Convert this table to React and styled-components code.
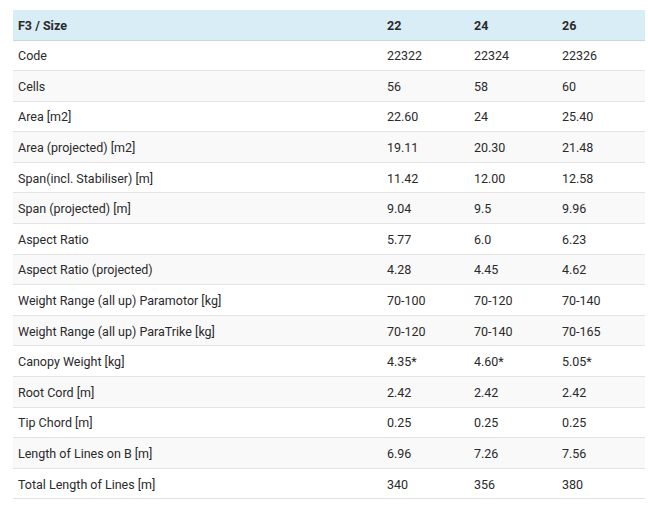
import React from "react";
import styled, { createGlobalStyle } from "styled-components";

const Global = createGlobalStyle`
  html, body { margin: 0; padding: 0; background: #fff; }
  body { font-family: Roboto, "Liberation Sans", Arial, sans-serif; }
`;

const Wrap = styled.div`
  padding: 10px 3px 0 13px;
`;

const Table = styled.table`
  width: 632px;
  border-collapse: collapse;
  font-size: 12.5px;
  color: #2a2a2a;
  table-layout: fixed;
`;

const HeadRow = styled.tr`
  background: #d9edf7;
`;

const Th = styled.th`
  box-sizing: border-box;
  text-align: left;
  font-weight: 700;
  padding: 1px 5px 0;
  height: 30px;
  border-bottom: 1px solid #c9d6de;
  width: ${(p) => p.$w}px;
`;

const Row = styled.tr`
  background: ${(p) => (p.$alt ? "#f9f9f9" : "#fff")};
`;

const Td = styled.td`
  padding: 1px 5px 0;
  height: 28.6px;
  border-bottom: 1px solid #e2e2e2;
  white-space: nowrap;
`;

const data = [
  ["Code", "22322", "22324", "22326"],
  ["Cells", "56", "58", "60"],
  ["Area [m2]", "22.60", "24", "25.40"],
  ["Area (projected) [m2]", "19.11", "20.30", "21.48"],
  ["Span(incl. Stabiliser) [m]", "11.42", "12.00", "12.58"],
  ["Span (projected) [m]", "9.04", "9.5", "9.96"],
  ["Aspect Ratio", "5.77", "6.0", "6.23"],
  ["Aspect Ratio (projected)", "4.28", "4.45", "4.62"],
  ["Weight Range (all up) Paramotor [kg]", "70-100", "70-120", "70-140"],
  ["Weight Range (all up) ParaTrike [kg]", "70-120", "70-140", "70-165"],
  ["Canopy Weight [kg]", "4.35*", "4.60*", "5.05*"],
  ["Root Cord [m]", "2.42", "2.42", "2.42"],
  ["Tip Chord [m]", "0.25", "0.25", "0.25"],
  ["Length of Lines on B [m]", "6.96", "7.26", "7.56"],
  ["Total Length of Lines [m]", "340", "356", "380"],
];

export default function App() {
  return (
    <Wrap>
      <Global />
      <Table>
        <thead>
          <HeadRow>
            <Th $w={369}>F3 / Size</Th>
            <Th $w={87}>22</Th>
            <Th $w={88}>24</Th>
            <Th $w={88}>26</Th>
          </HeadRow>
        </thead>
        <tbody>
          {data.map((r, i) => (
            <Row key={i} $alt={i % 2 === 1}>
              {r.map((c, j) => (
                <Td key={j}>{c}</Td>
              ))}
            </Row>
          ))}
        </tbody>
      </Table>
    </Wrap>
  );
}
